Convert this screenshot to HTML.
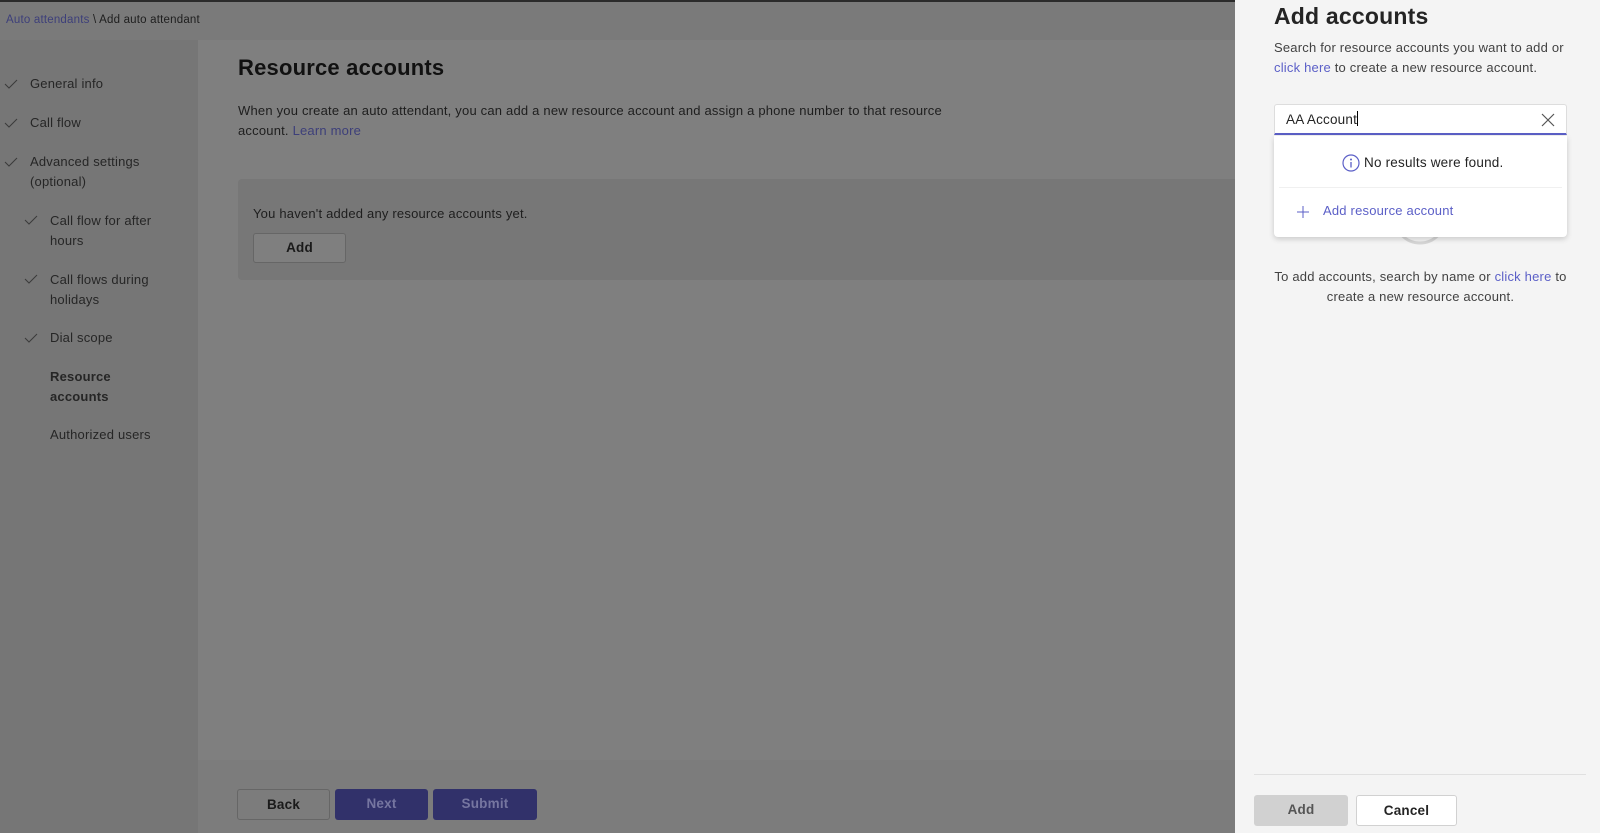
<!DOCTYPE html>
<html><head><style>
*{box-sizing:border-box;margin:0;padding:0}
body{width:1600px;height:833px;overflow:hidden;font-family:"Liberation Sans",sans-serif;background:#7f7f7f;position:relative;color:#1a1a1a;letter-spacing:.2px}
.a{position:absolute;white-space:nowrap}
.top{left:0;top:0;width:1235px;height:40px;background:#7a7a7a;border-top:2px solid #2b2b2b}
.side{left:0;top:40px;width:198px;height:793px;background:#767676}
.si{font-size:13px;color:#262626;line-height:19.5px;white-space:normal}
.btn{border-radius:3px;font-size:13.5px;font-weight:bold;text-align:center;line-height:30px}
.p{font-size:13px;color:#424242}
.lk{color:#5b5fc7}
</style></head><body>
<div class="a top"></div>
<div class="a" style="left:6px;top:14px;font-size:11.5px;color:#1e1e1e"><span style="color:#3d3f7a">Auto attendants</span> \ Add auto attendant</div>
<div class="a side"></div>
<svg class="a" style="left:0;top:0" width="198" height="460">
<g fill="none" stroke="#3a3a3a" stroke-width="1">
<path d="M5 84 l4 4 l8 -8"/><path d="M5 123 l4 4 l8 -8"/><path d="M5 162 l4 4 l8 -8"/>
<path d="M25 220 l4 4 l8 -8"/><path d="M25 279 l4 4 l8 -8"/><path d="M25 338 l4 4 l8 -8"/>
</g></svg>
<div class="a si" style="left:30px;top:74px">General info</div>
<div class="a si" style="left:30px;top:113px">Call flow</div>
<div class="a si" style="left:30px;top:152px;width:160px">Advanced settings<br>(optional)</div>
<div class="a si" style="left:50px;top:211px">Call flow for after<br>hours</div>
<div class="a si" style="left:50px;top:270px">Call flows during<br>holidays</div>
<div class="a si" style="left:50px;top:328px">Dial scope</div>
<div class="a si" style="left:50px;top:367px;font-weight:bold">Resource<br>accounts</div>
<div class="a si" style="left:50px;top:425px">Authorized users</div>

<div class="a" style="left:238px;top:55px;font-size:22px;font-weight:bold;color:#111">Resource accounts</div>
<div class="a" style="left:238px;top:101px;font-size:13px;line-height:19.5px;color:#1e1e1e">When you create an auto attendant, you can add a new resource account and assign a phone number to that resource<br>account. <span style="color:#3d3f7a">Learn more</span></div>
<div class="a" style="left:238px;top:179px;width:997px;height:101px;background:#777;border-radius:4px 0 0 4px"></div>
<div class="a" style="left:253px;top:206px;font-size:13px;color:#1e1e1e">You haven't added any resource accounts yet.</div>
<div class="a btn" style="left:253px;top:233px;width:93px;height:30px;border:1px solid #666;background:#7f7f7f;color:#1a1a1a;line-height:28px">Add</div>
<div class="a" style="left:198px;top:760px;width:1037px;height:73px;background:#7c7c7c"></div>
<div class="a btn" style="left:237px;top:789px;width:93px;height:31px;border:1px solid #666;color:#1a1a1a;line-height:29px">Back</div>
<div class="a btn" style="left:335px;top:789px;width:93px;height:31px;background:#31316a;color:#7676a0">Next</div>
<div class="a btn" style="left:433px;top:789px;width:104px;height:31px;background:#31316a;color:#7676a0">Submit</div>

<div class="a" style="left:1235px;top:0;width:365px;height:833px;background:#f4f4f4"></div>
<div class="a" style="left:1274px;top:3px;font-size:23px;font-weight:bold;color:#242424">Add accounts</div>
<div class="a p" style="left:1274px;top:38px;line-height:19.5px">Search for resource accounts you want to add or<br><span class="lk">click here</span> to create a new resource account.</div>
<div class="a" style="left:1274px;top:104px;width:293px;height:31px;background:#fff;border:1px solid #ddd;border-bottom:2px solid #5b5fc7;border-radius:3px 3px 0 0"></div>
<div class="a" style="left:1286px;top:111px;font-size:13.5px;color:#242424">AA Account<span style="display:inline-block;width:1px;height:15px;background:#000;vertical-align:-2px"></span></div>
<svg class="a" style="left:1541px;top:113px" width="14" height="14"><path d="M1 1L13 13M13 1L1 13" stroke="#555" stroke-width="1.2"/></svg>
<svg class="a" style="left:1375px;top:218px" width="90" height="40"><circle cx="45" cy="0" r="25" fill="none" stroke="#d6d6d6" stroke-width="3"/></svg>
<div class="a" style="left:1274px;top:136px;width:293px;height:101px;background:#fff;border-radius:0 0 4px 4px;box-shadow:0 2px 6px rgba(0,0,0,.18)"></div>
<div class="a" style="left:1279px;top:187px;width:283px;height:1px;background:#f0f0f0"></div>
<svg class="a" style="left:1342px;top:154px" width="18" height="18"><circle cx="9" cy="9" r="8" fill="none" stroke="#5b5fc7" stroke-width="1.2"/><circle cx="9" cy="5.5" r="1" fill="#5b5fc7"/><path d="M9 8v5.5" stroke="#5b5fc7" stroke-width="1.3"/></svg>
<div class="a p" style="left:1364px;top:155px;color:#242424;font-size:13.5px">No results were found.</div>
<svg class="a" style="left:1296px;top:205px" width="14" height="14"><path d="M7 1v12M1 7h12" stroke="#5b5fc7" stroke-width="1"/></svg>
<div class="a lk" style="left:1323px;top:203px;font-size:13px">Add resource account</div>
<div class="a p" style="left:1272px;top:267px;width:297px;text-align:center;white-space:normal;line-height:19.5px">To add accounts, search by name or <span class="lk">click here</span> to create a new resource account.</div>
<div class="a" style="left:1254px;top:774px;width:332px;height:1px;background:#e0e0e0"></div>
<div class="a btn" style="left:1254px;top:795px;width:94px;height:31px;background:#d1d1d1;color:#555">Add</div>
<div class="a btn" style="left:1356px;top:795px;width:101px;height:31px;background:#fff;border:1px solid #d1d1d1;color:#242424;line-height:29px">Cancel</div>
</body></html>
